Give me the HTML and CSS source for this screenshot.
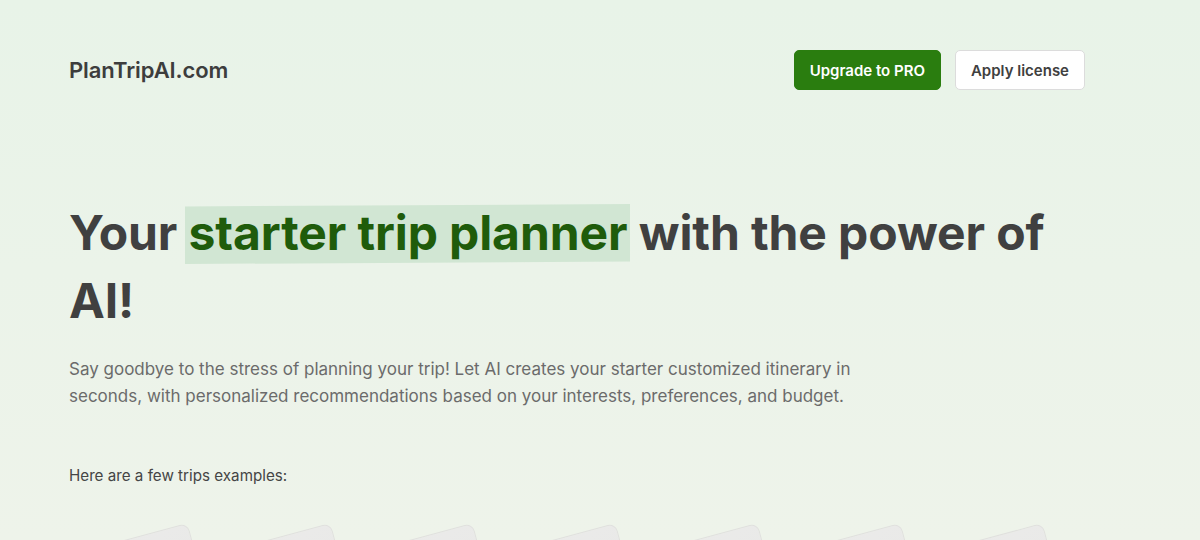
FILE: index.html
```html
<!DOCTYPE html>
<html lang="en">
<head>
<meta charset="utf-8">
<title>PlanTripAI.com</title>
<link rel="stylesheet" href="styles.css">
</head>
<body>
<div class="page">
  <header class="header">
    <div class="logo">PlanTripAI.com</div>
    <nav class="actions">
      <button class="btn btn-primary">Upgrade to PRO</button>
      <button class="btn btn-secondary">Apply license</button>
    </nav>
  </header>
  <main class="hero">
    <h1 class="title">Your <span class="mark">starter trip planner</span> with the power of AI!</h1>
    <p class="lead">Say goodbye to the stress of planning your trip! Let AI creates your starter customized itinerary in seconds, with personalized recommendations based on your interests, preferences, and budget.</p>
    <p class="examples-label">Here are a few trips examples:</p>
    <div class="cards">
      <div class="card"></div>
      <div class="card"></div>
      <div class="card"></div>
      <div class="card"></div>
      <div class="card"></div>
      <div class="card"></div>
      <div class="card"></div>
    </div>
  </main>
</div>
</body>
</html>
```
FILE: styles.css
```css
* { box-sizing: border-box; }
html, body { margin: 0; padding: 0; }
html { overflow: hidden; }
body {
  font-family: Inter, "Noto Sans", sans-serif;
  background: linear-gradient(180deg, #e8f3e8 0%, #ebf3e9 50%, #eef3ea 100%);
  color: #404040;
  height: 540px;
  overflow: hidden;
}
.page {
  padding: 50px 115px 0 69px;
}
.header {
  display: flex;
  align-items: center;
  justify-content: space-between;
  height: 40px;
}
.logo {
  font-size: 22px;
  font-weight: 600;
  color: #3d3d3d;
  letter-spacing: -0.1px;
}
.actions {
  display: flex;
  gap: 14px;
}
.btn {
  font-family: Inter, sans-serif;
  font-size: 15px;
  font-weight: 600;
  height: 40px;
  padding: 0 15px;
  border-radius: 5px;
  cursor: pointer;
}
.btn-primary {
  background: #2a7d0f;
  color: #ffffff;
  border: 1px solid #2a7d0f;
}
.btn-secondary {
  background: #ffffff;
  color: #404040;
  border: 1px solid #dcdcdc;
}
.hero {
  padding-top: 109px;
}
.title {
  margin: 0;
  font-size: 48px;
  line-height: 68px;
  font-weight: 700;
  color: #404040;
  letter-spacing: -0.1px;
  max-width: 1010px;
}
.mark {
  position: relative;
  color: #1f5c0b;
  z-index: 0;
}
.mark::before {
  content: "";
  position: absolute;
  left: -4px;
  right: -3px;
  top: 1px;
  bottom: -2px;
  background: #d1e6d3;
  clip-path: polygon(0 4%, 100% 0, 100% 96%, 0 100%);
  z-index: -1;
}
.lead {
  margin: 21px 0 0;
  font-size: 17px;
  line-height: 27px;
  color: #6b6b6b;
  max-width: 800px;
}
.examples-label {
  margin: 54px 0 0;
  font-size: 15.2px;
  line-height: 24px;
  color: #454545;
}
.cards {
  display: flex;
  gap: 22.5px;
  padding-left: 20px;
  margin-top: 48px;
}
.card {
  flex: 0 0 120px;
  height: 150px;
  border-radius: 8px;
  background: linear-gradient(160deg, #ebebea, #e6e6e4);
  border: 1px solid #e0e0de;
  transform: rotate(-15deg);
}
```
